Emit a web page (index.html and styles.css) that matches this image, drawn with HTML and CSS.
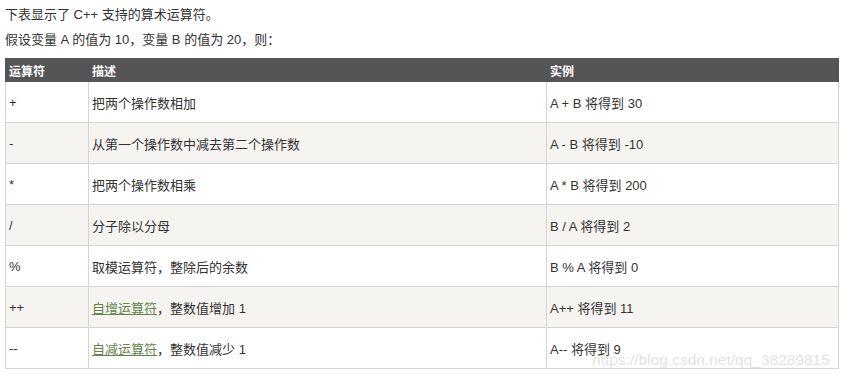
FILE: index.html
```html
<!DOCTYPE html>
<html lang="zh">
<head>
<meta charset="utf-8">
<link rel="stylesheet" href="styles.css">
</head>
<body>
<div class="page">
  <p>下表显示了 C++ 支持的算术运算符。</p>
  <p>假设变量 A 的值为 10，变量 B 的值为 20，则：</p>
  <table class="ops">
    <thead>
      <tr><th class="c1">运算符</th><th class="c2">描述</th><th class="c3">实例</th></tr>
    </thead>
    <tbody>
      <tr><td class="c1">+</td><td>把两个操作数相加</td><td>A + B 将得到 30</td></tr>
      <tr class="alt"><td class="c1">-</td><td>从第一个操作数中减去第二个操作数</td><td>A - B 将得到 -10</td></tr>
      <tr><td class="c1">*</td><td>把两个操作数相乘</td><td>A * B 将得到 200</td></tr>
      <tr class="alt"><td class="c1">/</td><td>分子除以分母</td><td>B / A 将得到 2</td></tr>
      <tr><td class="c1">%</td><td>取模运算符，整除后的余数</td><td>B % A 将得到 0</td></tr>
      <tr class="alt"><td class="c1">++</td><td><a href="#">自增运算符</a>，整数值增加 1</td><td>A++ 将得到 11</td></tr>
      <tr><td class="c1">--</td><td><a href="#">自减运算符</a>，整数值减少 1</td><td>A-- 将得到 9</td></tr>
    </tbody>
  </table>
  <div class="watermark">https://blog.csdn.net/qq_38289815</div>
</div>
</body>
</html>
```
FILE: styles.css
```css
html, body {
  margin: 0;
  padding: 0;
  background: #fff;
}
body {
  font-family: "Liberation Sans", "Noto Sans CJK SC", sans-serif;
  font-size: 13px;
  color: #333;
}
.page {
  position: relative;
  padding: 0 5px;
  width: 834px;
}
p {
  margin: 5px 0;
  line-height: 20px;
}
.ops {
  margin-top: 8px;
  width: 834px;
  border-collapse: separate;
  border-spacing: 0;
  table-layout: fixed;
}
.ops th,
.ops td {
  box-sizing: border-box;
  padding: 0 3px;
  text-align: left;
  vertical-align: middle;
}
.ops th {
  background: #555;
  color: #fff;
  font-size: 12px;
  font-weight: bold;
  height: 24px;
  border-right: 1px solid #555;
}
.ops th.c1 {
  width: 84px;
  border-left: 1px solid #555;
}
.ops th.c2 { width: 458px; }
.ops th.c3 { width: 292px; }
.ops td {
  height: 41px;
  border-right: 1px solid #d4d4d4;
  border-bottom: 1px solid #d4d4d4;
}
.ops td.c1 {
  border-left: 1px solid #d4d4d4;
}
.ops tr.alt td {
  background: #f6f4f0;
}
.ops a {
  color: #64854c;
  text-decoration: underline;
}
.watermark {
  position: absolute;
  left: 592px;
  top: 346px;
  font-size: 15.5px;
  color: rgba(200, 200, 200, 0.55);
  pointer-events: none;
  white-space: nowrap;
}
```
